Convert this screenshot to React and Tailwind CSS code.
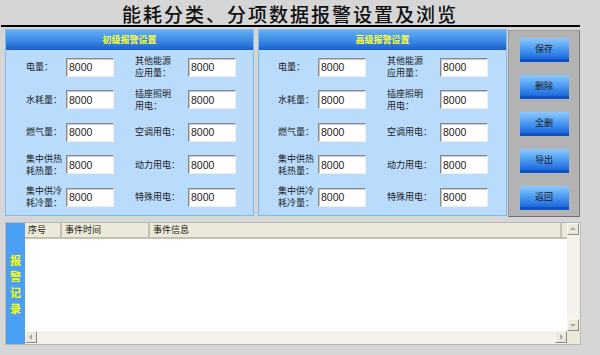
import React from "react";

const cjk = "font-['Noto_Sans_CJK_SC',sans-serif]";

const rows = [
  [["电量："], ["其他能源", "应用量："]],
  [["水耗量："], ["插座照明", "用电："]],
  [["燃气量："], ["空调用电："]],
  [["集中供热", "耗热量："], ["动力用电："]],
  [["集中供冷", "耗冷量："], ["特殊用电："]],
];

const buttons = ["保存", "删除", "全删", "导出", "返回"];

function Label({ lines, w }) {
  return (
    <div className={`${w} flex flex-col justify-center text-[9px] leading-[12px] text-[#202020] ${cjk}`}>
      {lines.map((l) => (
        <span key={l}>{l}</span>
      ))}
    </div>
  );
}

function Box() {
  return (
    <input
      defaultValue="8000"
      className="w-[48px] h-[19px] bg-white px-[2px] text-[10.5px] text-[#222] font-['Liberation_Sans',sans-serif] border border-[#8a8a8a] border-b-[#eeeeee] border-r-[#eeeeee] shadow-[inset_1px_1px_0_#c8c8c8] outline-none"
    />
  );
}

function Panel({ title, pl }) {
  return (
    <div className="w-[249px] h-[187px] border border-[#7fb9ee] bg-[#b9dcfd] flex flex-col">
      <div className={`h-[20px] bg-gradient-to-b from-[#62aef6] via-[#3f8ce8] to-[#1a5fc8] flex items-center justify-center text-[9px] font-bold text-[#ffff33] ${cjk}`}>
        {title}
      </div>
      <div className={`flex flex-col pt-[1px] ${pl}`}>
        {rows.map(([a, b], i) => (
          <div key={i} className="h-[32.5px] flex items-center">
            <Label lines={a} w="w-[40px]" />
            <Box />
            <div className="w-[21px]" />
            <Label lines={b} w="w-[53px]" />
            <Box />
          </div>
        ))}
      </div>
    </div>
  );
}

function Arrow({ dir }) {
  const pts = {
    up: "2,6 5,3 8,6",
    down: "2,4 5,7 8,4",
    left: "6,2 3,5 6,8",
    right: "4,2 7,5 4,8",
  };
  return (
    <div className="w-[12px] h-[12px] bg-[#ece9d8] border border-[#f8f8f8] border-b-[#8a8a8a] border-r-[#8a8a8a] flex items-center justify-center">
      <svg width="10" height="10" viewBox="0 0 10 10">
        <polygon points={pts[dir]} fill="#a8a8a8" />
      </svg>
    </div>
  );
}

export default function App() {
  return (
    <div className="w-[600px] h-[355px] bg-[#d6d6d6] overflow-hidden">
      <div className="w-[580px]">
        <div className={`h-[25px] pt-[2px] text-center text-[19px] leading-[23px] tracking-[2px] text-[#111] font-medium ${cjk}`}>
          能耗分类、分项数据报警设置及浏览
        </div>
        <div className="ml-[1px] h-[2px] bg-black" />
      </div>

      <div className="flex pl-[5px] mt-[2px]">
        <Panel title="初级报警设置" pl="pl-[20px]" />
        <div className="w-[4px]" />
        <Panel title="高级报警设置" pl="pl-[19px]" />
        <div className="w-[1px]" />
        <div className="mt-[1px] w-[72px] h-[187px] bg-[#b3b3b3] border border-[#9a9a9a] border-b-[#6e6e6e] border-r-[#7a7a7a] flex flex-col items-center pt-[7px] gap-[13px]">
          {buttons.map((b) => (
            <div
              key={b}
              className={`w-[49px] h-[24px] bg-gradient-to-b from-[#8ccaff] via-[#4c9cf2] to-[#1c68dc] border-b-[3px] border-[#0f52c4] flex items-center justify-center text-[9px] text-[#1a1a1a] ${cjk}`}
            >
              {b}
            </div>
          ))}
        </div>
      </div>

      <div className="ml-[5px] mt-[5px] w-[576px] h-[123px] flex border border-[#b8b8b8] bg-white">
        <div className={`w-[19px] bg-[#4aa0f4] flex flex-col items-center justify-center text-[11px] leading-[16px] font-bold text-[#ffff00] ${cjk}`}>
          <span>报</span>
          <span>警</span>
          <span>记</span>
          <span>录</span>
        </div>
        <div className="flex-1 flex flex-col">
          <div className="flex-1 flex">
            <div className="flex-1 flex flex-col">
              <div className={`h-[16px] flex bg-[#ece9d8] border-b-2 border-[#c4c0b0] text-[9px] leading-[14px] text-[#222] ${cjk}`}>
                <div className="w-[37px] pl-[3px] border-r-2 border-[#c4c0b0]">序号</div>
                <div className="w-[88px] pl-[3px] border-r-2 border-[#c4c0b0]">事件时间</div>
                <div className="flex-1 pl-[3px] border-r-2 border-[#c4c0b0]">事件信息</div>
                <div className="w-[5px]" />
              </div>
              <div className="flex-1 bg-white" />
            </div>
            <div className="w-[13px] bg-[#f4f2ea] flex flex-col justify-between items-end pr-[1px]">
              <Arrow dir="up" />
              <Arrow dir="down" />
            </div>
          </div>
          <div className="h-[13px] flex">
            <div className="flex-1 bg-[#f4f2ea] flex justify-between">
              <Arrow dir="left" />
              <Arrow dir="right" />
            </div>
            <div className="w-[13px] bg-[#ece9d8]" />
          </div>
        </div>
      </div>
    </div>
  );
}
